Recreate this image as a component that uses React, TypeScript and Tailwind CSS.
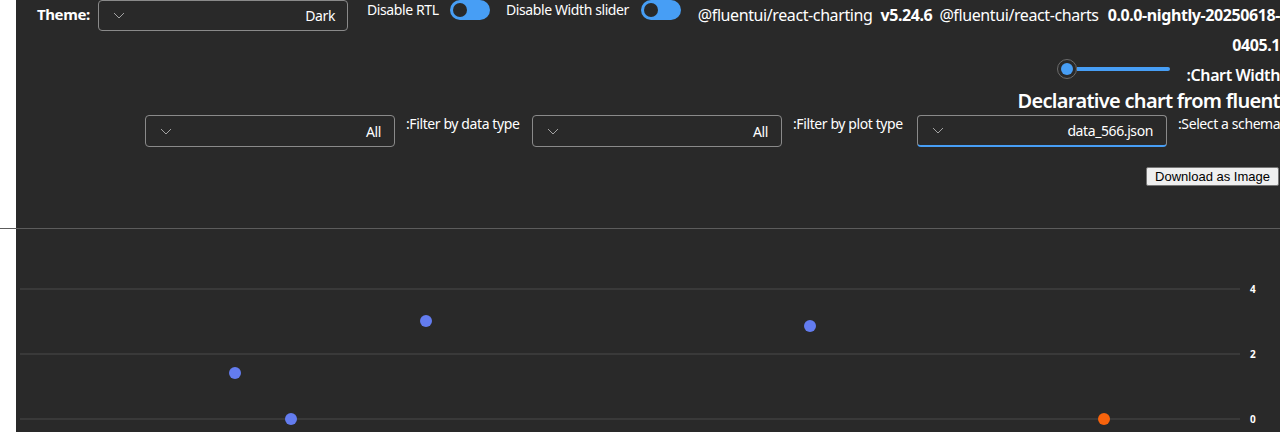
import { ReactNode } from "react";

function Chevron() {
  return (
    <svg width="12" height="7" viewBox="0 0 12 7" fill="none">
      <path d="M1 1 L6 6 L11 1" stroke="#a3a3a3" strokeWidth="1" />
    </svg>
  );
}

function Dropdown({ value, focused = false }: { value: string; focused?: boolean }) {
  return (
    <div
      className={
        "flex h-[32px] w-[250px] shrink-0 items-center justify-between rounded-[4px] border border-[#8a8a8a] pl-[14px] pr-[13px] " +
        (focused ? "border-b-2 border-b-[#479ef5]" : "")
      }
    >
      <Chevron />
      <span className="text-[14px] text-white">{value}</span>
    </div>
  );
}

function Toggle() {
  return (
    <div className="flex h-[20px] w-[40px] shrink-0 items-center rounded-full bg-[#479ef5] pl-[3px]">
      <div className="h-[14px] w-[14px] rounded-full bg-[#292929]" />
    </div>
  );
}

function Label({ children, className = "" }: { children: ReactNode; className?: string }) {
  return (
    <span className={"shrink-0 whitespace-nowrap text-[14px] leading-[20px] text-white " + className}>
      {children}
    </span>
  );
}

const gridRows = [
  { y: 60, label: "4" },
  { y: 125, label: "2" },
  { y: 190, label: "0" },
];

const points = [
  { x: 219, y: 144, color: "#637cef" },
  { x: 275, y: 190, color: "#637cef" },
  { x: 410, y: 92, color: "#637cef" },
  { x: 794, y: 97, color: "#637cef" },
  { x: 1088, y: 190, color: "#f7630c" },
];

export default function App() {
  return (
    <div className="w-[1280px] overflow-hidden bg-white font-['Segoe_UI','Noto_Sans',sans-serif] tracking-[-0.025em]">
      <div className="flex h-[228px]">
        <div className="w-[16px] shrink-0 bg-white" />
        <div className="flex min-w-0 flex-1 flex-col overflow-hidden bg-[#292929] text-white">
          {/* top bar */}
          <div className="flex h-[59px] items-start pl-[21px]">
            <span className="w-[61px] shrink-0 whitespace-nowrap text-[15px] font-bold leading-[28px]">Theme:</span>
            <div className="flex h-[31px] w-[250px] shrink-0 items-center justify-between rounded-[4px] border border-[#8a8a8a] pl-[14px] pr-[12px]">
              <Chevron />
              <span className="text-[14px]">Dark</span>
            </div>
            <Label className="ml-[19px] w-[83px]">Disable RTL</Label>
            <Toggle />
            <Label className="ml-[16px] w-[135px]">Disable Width slider</Label>
            <Toggle />
            <div className="ml-[16px] flex min-w-0 flex-1 flex-col items-end text-[16px] leading-[30px]">
              <div className="whitespace-nowrap">
                <span>@fluentui/react-charting</span>
                <span className="ml-[8px] font-bold">v5.24.6</span>
                <span className="ml-[7px]">@fluentui/react-charts</span>
                <span className="ml-[9px] font-bold">0.0.0-nightly-20250618-</span>
              </div>
              <div className="font-bold">0405.1</div>
            </div>
          </div>

          {/* chart width */}
          <div className="flex h-[29px] items-start justify-end">
            <div className="flex h-[20px] w-[113px] items-center">
              <div className="flex h-[20px] w-[20px] items-center justify-center rounded-full border border-[#6b6b6b] bg-[#292929]">
                <div className="h-[12px] w-[12px] rounded-full bg-[#479ef5]" />
              </div>
              <div className="h-[4px] flex-1 rounded-r-full bg-[#479ef5]" />
            </div>
            <span className="ml-[17px] mt-[5px] whitespace-nowrap text-[16px] font-semibold leading-[22px]">:Chart Width</span>
          </div>

          {/* heading */}
          <div className="flex h-[27px] justify-end">
            <h2 className="whitespace-nowrap text-[20px] font-semibold leading-[26px] tracking-[-0.035em]">
              Declarative chart from fluent
            </h2>
          </div>

          {/* filters */}
          <div className="flex items-start pl-[129px]">
            <Dropdown value="All" />
            <Label className="-mt-px ml-[11px] mr-[11px] w-[115px]">:Filter by data type</Label>
            <Dropdown value="All" />
            <Label className="-mt-px ml-[11px] mr-[11px] w-[113px]">:Filter by plot type</Label>
            <Dropdown value="data_566.json" focused />
            <Label className="-mt-px ml-[11px]">:Select a schema</Label>
          </div>

          <div className="mt-[20px] flex justify-end pr-[1px]">
            <button className="h-[19px] w-[133px] rounded-[2px] border border-[#767676] bg-[#efefef] font-['Liberation_Sans',sans-serif] text-[13px] leading-[17px] tracking-normal text-black">
              Download as Image
            </button>
          </div>
        </div>
      </div>

      <div className="h-px bg-[#5c5c5c]" />

      <div className="flex h-[220px]">
        <div className="w-[16px] shrink-0 bg-white" />
        <div className="flex-1 bg-[#292929]">
          <svg width="1264" height="220" viewBox="0 0 1264 220">
            {gridRows.map((row) => (
              <g key={row.label}>
                <line x1="4" x2="1224" y1={row.y} y2={row.y} stroke="#4a4a4a" strokeWidth="1" />
                <text
                  x="1234"
                  y={row.y + 3.5}
                  fill="#ffffff"
                  fontSize="10"
                  fontWeight="700"
                  fontFamily="'Segoe UI','Noto Sans',sans-serif"
                >
                  {row.label}
                </text>
              </g>
            ))}
            {points.map((p) => (
              <circle key={p.x} cx={p.x} cy={p.y} r="6" fill={p.color} />
            ))}
          </svg>
        </div>
      </div>
    </div>
  );
}
